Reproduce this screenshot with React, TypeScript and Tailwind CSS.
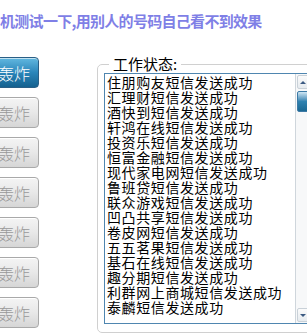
const items = [
  "住朋购友短信发送成功",
  "汇理财短信发送成功",
  "酒快到短信发送成功",
  "轩鸿在线短信发送成功",
  "投资乐短信发送成功",
  "恒富金融短信发送成功",
  "现代家电网短信发送成功",
  "鲁班贷短信发送成功",
  "联众游戏短信发送成功",
  "凹凸共享短信发送成功",
  "卷皮网短信发送成功",
  "五五茗果短信发送成功",
  "基石在线短信发送成功",
  "趣分期短信发送成功",
  "利群网上商城短信发送成功",
  "泰麟短信发送成功",
];

function BombButton({ active }: { active?: boolean }) {
  return (
    <button
      className={
        active
          ? "ml-[-11px] w-[50px] h-[31px] rounded-[4px] border border-[#2a5f86] bg-gradient-to-b from-[#62b8e0] via-[#2a86ba] to-[#15618f] text-white text-[16px] font-light shadow-[inset_0_1px_0_rgba(255,255,255,0.6)]"
          : "ml-[-11px] w-[50px] h-[31px] rounded-[4px] border border-[#a9a9a9] bg-gradient-to-b from-[#f4f4f4] via-[#e8e8e8] to-[#d6d6d6] text-[#999999] text-[16px] font-light shadow-[inset_0_1px_0_#ffffff]"
      }
      style={{ fontFamily: '"Noto Sans CJK SC", sans-serif' }}
    >
      轰炸
    </button>
  );
}

export default function App() {
  return (
    <div
      className="w-[307px] h-[336px] overflow-hidden bg-white"
      style={{ fontFamily: '"Noto Sans CJK SC", sans-serif' }}
    >
      <div className="h-[56px] pt-[12px] text-[15px] leading-[18px] font-bold text-[#7f7fe6] whitespace-nowrap tracking-[-0.7px]">
        机测试一下,用别人的号码自己看不到效果
      </div>
      <div className="flex">
        <div className="flex flex-col gap-[9px] pt-[1px]">
          {[0, 1, 2, 3, 4, 5, 6].map((i) => (
            <BombButton key={i} active={i === 0} />
          ))}
        </div>
        <fieldset className="ml-[58px] w-[225px] h-[277px] shrink-0 rounded-[5px] border border-[#d0d0d0] pl-[6px] pr-0 pb-[9px] shadow-[inset_1px_1px_0_#ffffff]">
          <legend className="ml-[5px] px-[4px] text-[15px] leading-[16px] text-black">
            工作状态:
          </legend>
          <div className="flex w-[209px] h-[251px] mt-[1px] border border-[#4f86b0] bg-white">
            <div className="flex-1 pl-[2px] pt-[1px] overflow-hidden">
              {items.map((t) => (
                <div key={t} className="text-[14px] tracking-[0.6px] leading-[15px] h-[15px] text-black whitespace-nowrap">
                  {t}
                </div>
              ))}
            </div>
            <div className="w-[17px] flex flex-col border-l border-[#cfd6dc] bg-[#f7f8f9]">
              <div className="h-[14px] mt-[1px] mx-[1px] flex items-center justify-center border border-[#c9d1d8] rounded-[2px] bg-gradient-to-b from-[#fbfbfb] to-[#e6ebef]">
                <div className="w-0 h-0 border-l-[3px] border-r-[3px] border-b-[3px] border-l-transparent border-r-transparent border-b-[#3b5a82] mr-[3px]" />
              </div>
              <div className="mx-[1px] mt-[2px] h-[21px] rounded-[2px] border border-[#3c7aa6] bg-gradient-to-b from-[#cfe6f3] via-[#2f82b0] to-[#1b6893]" />
              <div className="flex-1" />
              <div className="h-[14px] mb-[1px] mx-[1px] flex items-center justify-center border border-[#c9d1d8] rounded-[2px] bg-gradient-to-b from-[#fbfbfb] to-[#e6ebef]">
                <div className="w-0 h-0 border-l-[3px] border-r-[3px] border-t-[3px] border-l-transparent border-r-transparent border-t-[#3b5a82] mr-[3px]" />
              </div>
            </div>
          </div>
        </fieldset>
      </div>
    </div>
  );
}
